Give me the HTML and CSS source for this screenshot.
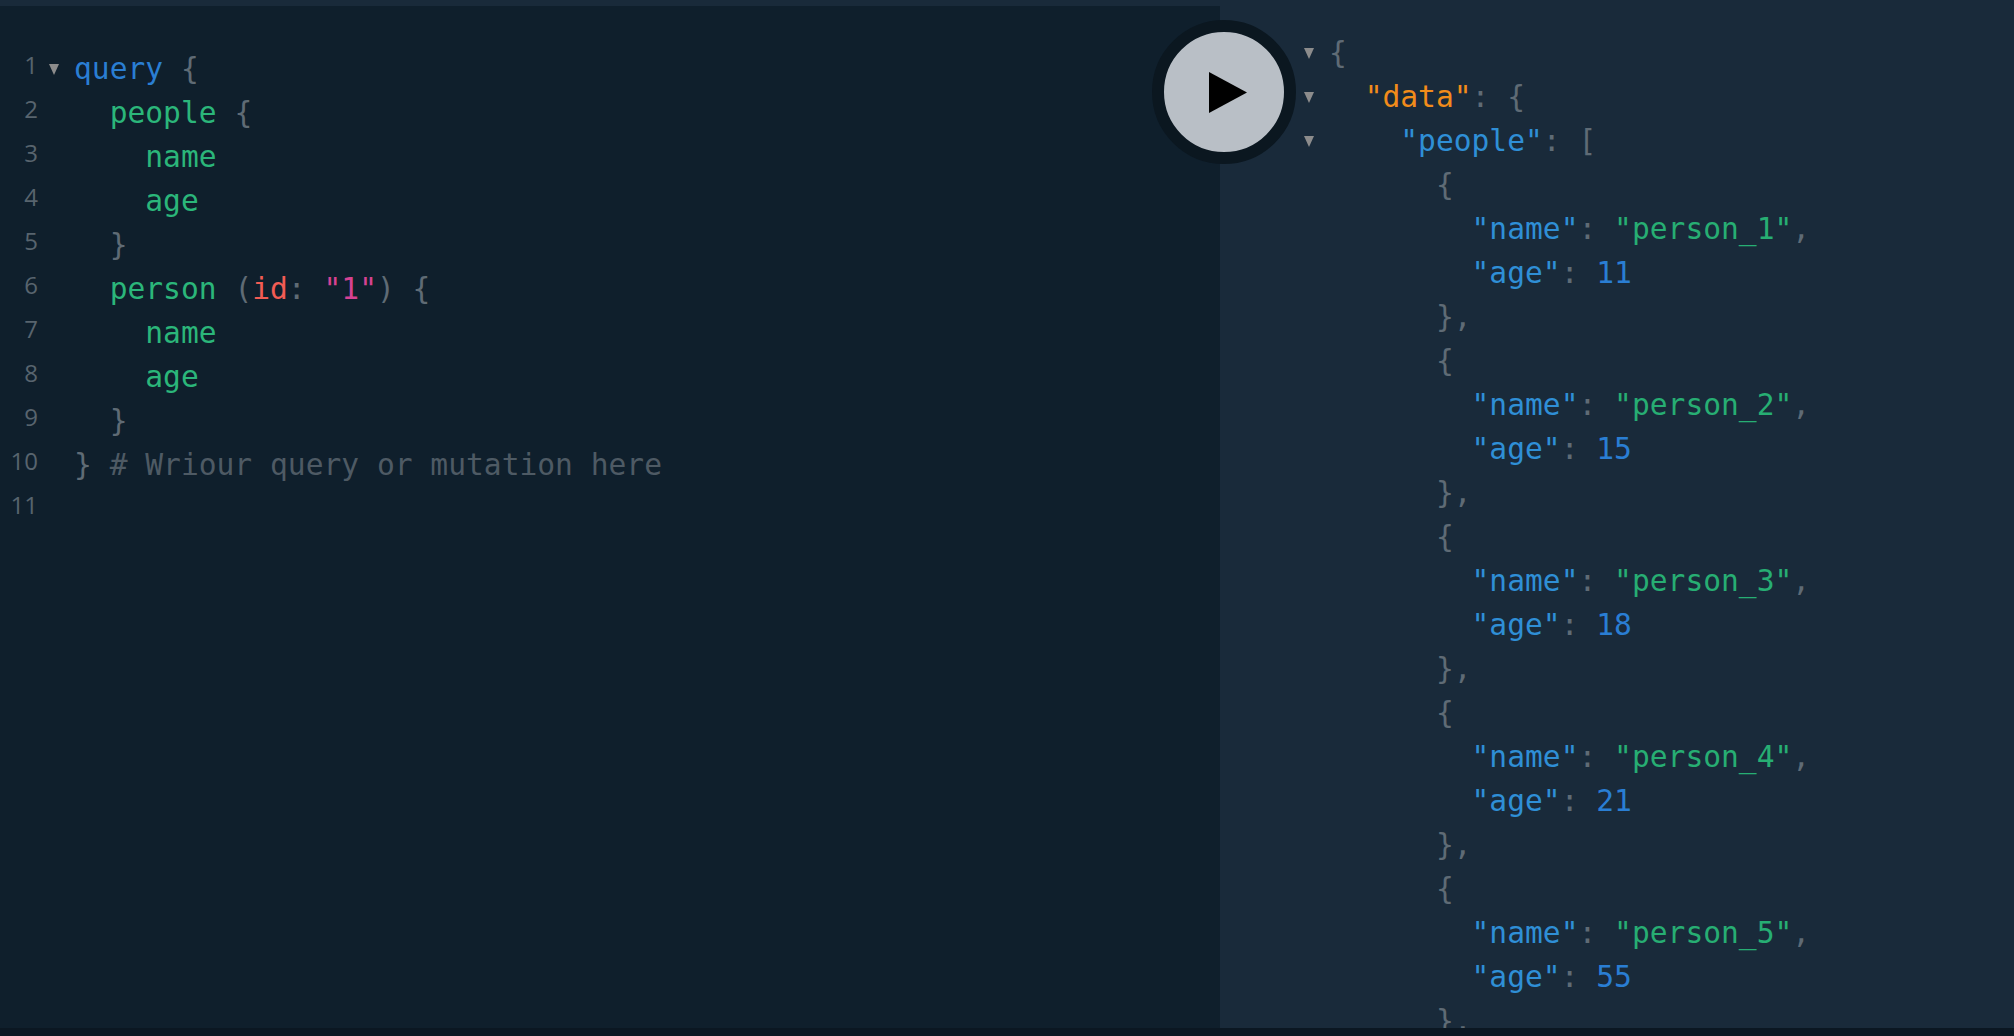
FILE: index.html
```html
<!DOCTYPE html>
<html lang="en">
<head>
<meta charset="utf-8">
<title>GraphQL Playground</title>
<link rel="stylesheet" href="styles.css">
</head>
<body>
<div class="app">
  <main class="panes">
    <section class="editor">
      <div class="gutter">
        <div class="num">1</div><div class="num">2</div><div class="num">3</div><div class="num">4</div><div class="num">5</div><div class="num">6</div><div class="num">7</div><div class="num">8</div><div class="num">9</div><div class="num">10</div><div class="num">11</div>
      </div>
      <div class="folds">
        <div class="fold-row"><span class="arrow"></span></div>
      </div>
      <div class="code">
        <div class="line"><span class="kw">query</span> <span class="p">{</span></div>
        <div class="line">  <span class="field">people</span> <span class="p">{</span></div>
        <div class="line">    <span class="field">name</span></div>
        <div class="line">    <span class="field">age</span></div>
        <div class="line">  <span class="p">}</span></div>
        <div class="line">  <span class="field">person</span> <span class="p">(</span><span class="arg">id</span><span class="p">:</span> <span class="str">"1"</span><span class="p">)</span> <span class="p">{</span></div>
        <div class="line">    <span class="field">name</span></div>
        <div class="line">    <span class="field">age</span></div>
        <div class="line">  <span class="p">}</span></div>
        <div class="line"><span class="p">}</span> <span class="comment"># Wriour query or mutation here</span></div>
        <div class="line"></div>
      </div>
    </section>
    <section class="result">
      <div class="folds result-folds">
        <div class="fold-row"><span class="arrow"></span></div>
        <div class="fold-row"><span class="arrow"></span></div>
        <div class="fold-row"><span class="arrow"></span></div>
      </div>
      <div class="code result-code">
        <div class="line"><span class="p">{</span></div>
        <div class="line">  <span class="data">"data"</span><span class="p">:</span> <span class="p">{</span></div>
        <div class="line">    <span class="key">"people"</span><span class="p">:</span> <span class="p">[</span></div>
        <div class="line">      <span class="p">{</span></div>
        <div class="line">        <span class="key">"name"</span><span class="p">:</span> <span class="val">"person_1"</span><span class="p">,</span></div>
        <div class="line">        <span class="key">"age"</span><span class="p">:</span> <span class="num-val">11</span></div>
        <div class="line">      <span class="p">},</span></div>
        <div class="line">      <span class="p">{</span></div>
        <div class="line">        <span class="key">"name"</span><span class="p">:</span> <span class="val">"person_2"</span><span class="p">,</span></div>
        <div class="line">        <span class="key">"age"</span><span class="p">:</span> <span class="num-val">15</span></div>
        <div class="line">      <span class="p">},</span></div>
        <div class="line">      <span class="p">{</span></div>
        <div class="line">        <span class="key">"name"</span><span class="p">:</span> <span class="val">"person_3"</span><span class="p">,</span></div>
        <div class="line">        <span class="key">"age"</span><span class="p">:</span> <span class="num-val">18</span></div>
        <div class="line">      <span class="p">},</span></div>
        <div class="line">      <span class="p">{</span></div>
        <div class="line">        <span class="key">"name"</span><span class="p">:</span> <span class="val">"person_4"</span><span class="p">,</span></div>
        <div class="line">        <span class="key">"age"</span><span class="p">:</span> <span class="num-val">21</span></div>
        <div class="line">      <span class="p">},</span></div>
        <div class="line">      <span class="p">{</span></div>
        <div class="line">        <span class="key">"name"</span><span class="p">:</span> <span class="val">"person_5"</span><span class="p">,</span></div>
        <div class="line">        <span class="key">"age"</span><span class="p">:</span> <span class="num-val">55</span></div>
        <div class="line">      <span class="p">},</span></div>
      </div>
    </section>
    <button class="run" type="button" aria-label="Run">
      <svg class="run-icon" viewBox="0 0 38 41" width="38" height="41"><path d="M0 0L38 20.5L0 41Z"/></svg>
    </button>
  </main>
</div>
</body>
</html>
```

FILE: styles.css
```css
* { box-sizing: border-box; }
html, body { margin: 0; height: 100%; overflow: hidden; }
body { background: #0b1722; }
.app { height: 1036px; display: flex; flex-direction: column; }
.panes {
  position: relative;
  display: flex;
  height: 1028px;
  padding-top: 6px;
  background: linear-gradient(#192a3a 6px, transparent 6px);
  overflow: hidden;
}
.editor {
  width: 1220px;
  display: flex;
  padding-top: 41px;
  background: #0f1f2c;
}
.gutter { width: 38px; flex: none; }
.num {
  height: 44px;
  text-align: right;
  font: 500 24px/36px "Open Sans", sans-serif;
  color: #58646e;
}
.folds { width: 36px; flex: none; }
.fold-row { height: 44px; display: flex; align-items: center; justify-content: center; padding-right: 4px; }
.arrow {
  width: 0;
  height: 0;
  border-left: 5.5px solid transparent;
  border-right: 5.5px solid transparent;
  border-top: 11px solid #8c8c8c;
}
.code { font: 29.6px/44px "DejaVu Sans Mono", monospace; color: #5f6b75; }
.line { height: 44px; white-space: pre; }
.result {
  flex: 1;
  display: flex;
  min-width: 0;
  overflow: hidden;
  padding: 25px 0 0 73px;
  background: #192a3a;
}
.result-folds { width: 36px; }
.kw { color: #2a7ed3; }
.field { color: #2bb67a; }
.p { color: #5f6b75; }
.arg { color: #f25c54; }
.str { color: #d64292; }
.comment { color: #4e5a64; }
.key { color: #2f8fd6; }
.data { color: #f28c1a; }
.val { color: #27ae73; }
.num-val { color: #2a7ed3; }
.run {
  position: absolute;
  left: 1152px;
  top: 20px;
  width: 144px;
  height: 144px;
  padding: 0 0 0 7px;
  border: 12px solid #0b1720;
  border-radius: 50%;
  background: #b9bfc6;
  display: flex;
  align-items: center;
  justify-content: center;
}
.run-icon { display: block; fill: #000; }
```
